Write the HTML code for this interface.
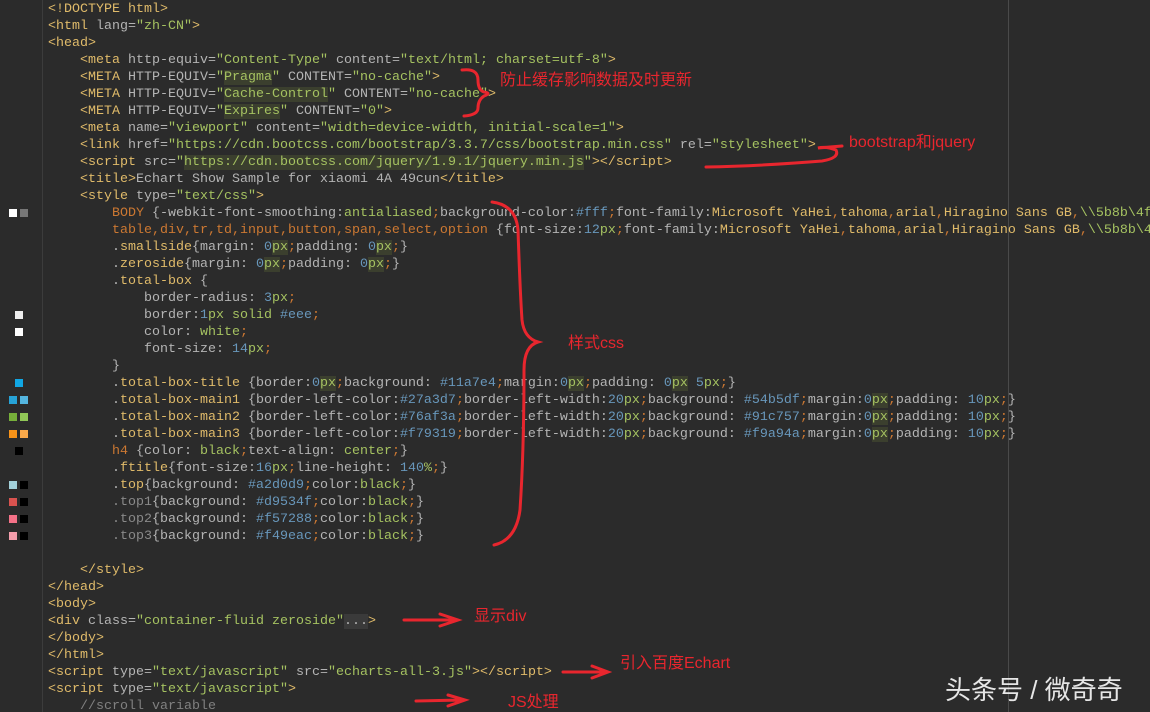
<!DOCTYPE html>
<html><head><meta charset="utf-8">
<style>
html,body{margin:0;padding:0;background:#2b2b2b;width:1150px;height:712px;overflow:hidden;position:relative}
.code{position:absolute;left:48px;top:1px;font-family:"Liberation Mono",monospace;font-size:13.33px;line-height:17px;color:#b4b4b4;white-space:pre}
.t{color:#e0bb6a}.a{color:#b4b4b4}.s{color:#a5c261}.n{color:#6897bb}.k{color:#cc7832}.sel{color:#e0bb6a}.v{color:#a5c261}.c{color:#808080}.hl{background:#3b3f2e}.px{color:#a5c261}.gy{color:#8a8a8a}
.gut{position:absolute;left:42px;top:0;width:1px;height:712px;background:#3c3c3c}
.rm{position:absolute;left:1008px;top:0;width:1px;height:712px;background:#4a4a4a}
.sw{position:absolute;width:8px;height:8px}
.red{position:absolute;color:#e8262e;font-family:"Liberation Sans","Noto Sans CJK SC",sans-serif;font-size:16px;line-height:18px;white-space:nowrap}
.wm{position:absolute;left:945px;top:670px;color:#e6e6e6;font-family:"Liberation Sans","Noto Sans CJK SC",sans-serif;font-size:26px;white-space:nowrap}
</style></head><body>
<div class="gut"></div><div class="rm"></div>
<div class="sw" style="left:9px;top:209px;background:#fff"></div><div class="sw" style="left:20px;top:209px;background:#777"></div>
<div class="sw" style="left:15px;top:311px;background:#eee"></div>
<div class="sw" style="left:15px;top:328px;background:#fff"></div>
<div class="sw" style="left:15px;top:379px;background:#11a7e4"></div>
<div class="sw" style="left:9px;top:396px;background:#27a3d7"></div><div class="sw" style="left:20px;top:396px;background:#54b5df"></div>
<div class="sw" style="left:9px;top:413px;background:#76af3a"></div><div class="sw" style="left:20px;top:413px;background:#91c757"></div>
<div class="sw" style="left:9px;top:430px;background:#f79319"></div><div class="sw" style="left:20px;top:430px;background:#f9a94a"></div>
<div class="sw" style="left:15px;top:447px;background:#000"></div>
<div class="sw" style="left:9px;top:481px;background:#a2d0d9"></div><div class="sw" style="left:20px;top:481px;background:#000"></div>
<div class="sw" style="left:9px;top:498px;background:#d9534f"></div><div class="sw" style="left:20px;top:498px;background:#000"></div>
<div class="sw" style="left:9px;top:515px;background:#f57288"></div><div class="sw" style="left:20px;top:515px;background:#000"></div>
<div class="sw" style="left:9px;top:532px;background:#f49eac"></div><div class="sw" style="left:20px;top:532px;background:#000"></div>
<div class="code"><span class="t">&lt;!DOCTYPE html&gt;</span>
<span class="t">&lt;html </span><span class="a">lang=</span><span class="s">"zh-CN"</span><span class="t">&gt;</span>
<span class="t">&lt;head&gt;</span>
    <span class="t">&lt;meta </span><span class="a">http-equiv=</span><span class="s">"Content-Type"</span> <span class="a">content=</span><span class="s">"text/html; charset=utf-8"</span><span class="t">&gt;</span>
    <span class="t">&lt;META </span><span class="a">HTTP-EQUIV=</span><span class="s">"<span class="hl">Pragma</span>"</span> <span class="a">CONTENT=</span><span class="s">"no-cache"</span><span class="t">&gt;</span>
    <span class="t">&lt;META </span><span class="a">HTTP-EQUIV=</span><span class="s">"<span class="hl">Cache-Control</span>"</span> <span class="a">CONTENT=</span><span class="s">"no-cache"</span><span class="t">&gt;</span>
    <span class="t">&lt;META </span><span class="a">HTTP-EQUIV=</span><span class="s">"<span class="hl">Expires</span>"</span> <span class="a">CONTENT=</span><span class="s">"0"</span><span class="t">&gt;</span>
    <span class="t">&lt;meta </span><span class="a">name=</span><span class="s">"viewport"</span> <span class="a">content=</span><span class="s">"width=device-width, initial-scale=1"</span><span class="t">&gt;</span>
    <span class="t">&lt;link </span><span class="a">href=</span><span class="s">"https://cdn.bootcss.com/bootstrap/3.3.7/css/bootstrap.min.css"</span> <span class="a">rel=</span><span class="s">"stylesheet"</span><span class="t">&gt;</span>
    <span class="t">&lt;script </span><span class="a">src=</span><span class="s">"<span class="hl">https://cdn.bootcss.com/jquery/1.9.1/jquery.min.js</span>"</span><span class="t">&gt;&lt;/script&gt;</span>
    <span class="t">&lt;title&gt;</span><span class="a">Echart Show Sample for xiaomi 4A 49cun</span><span class="t">&lt;/title&gt;</span>
    <span class="t">&lt;style </span><span class="a">type=</span><span class="s">"text/css"</span><span class="t">&gt;</span>
        <span class="k">BODY</span> {-webkit-font-smoothing:<span class="v">antialiased</span><span class="k">;</span>background-color:<span class="n">#fff</span><span class="k">;</span>font-family:<span class="sel">Microsoft YaHei</span><span class="k">,</span><span class="sel">tahoma</span><span class="k">,</span><span class="sel">arial</span><span class="k">,</span><span class="sel">Hiragino Sans GB</span><span class="k">,</span><span class="v">\\5b8b\4f</span>
        <span class="k">table,div,tr,td,input,button,span,select,option</span> {font-size:<span class="n">12</span><span class="px">px</span><span class="k">;</span>font-family:<span class="sel">Microsoft YaHei</span><span class="k">,</span><span class="sel">tahoma</span><span class="k">,</span><span class="sel">arial</span><span class="k">,</span><span class="sel">Hiragino Sans GB</span><span class="k">,</span><span class="v">\\5b8b\4</span>
        .<span class="sel">smallside</span>{margin: <span class="n">0</span><span class="px hl">px</span><span class="k">;</span>padding: <span class="n">0</span><span class="px hl">px</span><span class="k">;</span>}
        .<span class="sel">zeroside</span>{margin: <span class="n">0</span><span class="px hl">px</span><span class="k">;</span>padding: <span class="n">0</span><span class="px hl">px</span><span class="k">;</span>}
        .<span class="sel">total-box</span> {
            border-radius: <span class="n">3</span><span class="px">px</span><span class="k">;</span>
            border:<span class="n">1</span><span class="px">px</span> <span class="v">solid</span> <span class="n">#eee</span><span class="k">;</span>
            color: <span class="v">white</span><span class="k">;</span>
            font-size: <span class="n">14</span><span class="px">px</span><span class="k">;</span>
        }
        .<span class="sel">total-box-title</span> {border:<span class="n">0</span><span class="px hl">px</span><span class="k">;</span>background: <span class="n">#11a7e4</span><span class="k">;</span>margin:<span class="n">0</span><span class="px hl">px</span><span class="k">;</span>padding: <span class="n">0</span><span class="px hl">px</span> <span class="n">5</span><span class="px">px</span><span class="k">;</span>}
        .<span class="sel">total-box-main1</span> {border-left-color:<span class="n">#27a3d7</span><span class="k">;</span>border-left-width:<span class="n">20</span><span class="px">px</span><span class="k">;</span>background: <span class="n">#54b5df</span><span class="k">;</span>margin:<span class="n">0</span><span class="px hl">px</span><span class="k">;</span>padding: <span class="n">10</span><span class="px">px</span><span class="k">;</span>}
        .<span class="sel">total-box-main2</span> {border-left-color:<span class="n">#76af3a</span><span class="k">;</span>border-left-width:<span class="n">20</span><span class="px">px</span><span class="k">;</span>background: <span class="n">#91c757</span><span class="k">;</span>margin:<span class="n">0</span><span class="px hl">px</span><span class="k">;</span>padding: <span class="n">10</span><span class="px">px</span><span class="k">;</span>}
        .<span class="sel">total-box-main3</span> {border-left-color:<span class="n">#f79319</span><span class="k">;</span>border-left-width:<span class="n">20</span><span class="px">px</span><span class="k">;</span>background: <span class="n">#f9a94a</span><span class="k">;</span>margin:<span class="n">0</span><span class="px hl">px</span><span class="k">;</span>padding: <span class="n">10</span><span class="px">px</span><span class="k">;</span>}
        <span class="k">h4</span> {color: <span class="v">black</span><span class="k">;</span>text-align: <span class="v">center</span><span class="k">;</span>}
        .<span class="sel">ftitle</span>{font-size:<span class="n">16</span><span class="px">px</span><span class="k">;</span>line-height: <span class="n">140</span><span class="px">%</span><span class="k">;</span>}
        .<span class="sel">top</span>{background: <span class="n">#a2d0d9</span><span class="k">;</span>color:<span class="v">black</span><span class="k">;</span>}
        <span class="gy">.top1</span>{background: <span class="n">#d9534f</span><span class="k">;</span>color:<span class="v">black</span><span class="k">;</span>}
        <span class="gy">.top2</span>{background: <span class="n">#f57288</span><span class="k">;</span>color:<span class="v">black</span><span class="k">;</span>}
        <span class="gy">.top3</span>{background: <span class="n">#f49eac</span><span class="k">;</span>color:<span class="v">black</span><span class="k">;</span>}

    <span class="t">&lt;/style&gt;</span>
<span class="t">&lt;/head&gt;</span>
<span class="t">&lt;body&gt;</span>
<span class="t">&lt;div </span><span class="a">class=</span><span class="s">"container-fluid zeroside"</span><span style="background:#3a3a3a">...</span><span class="t">&gt;</span>
<span class="t">&lt;/body&gt;</span>
<span class="t">&lt;/html&gt;</span>
<span class="t">&lt;script </span><span class="a">type=</span><span class="s">"text/javascript"</span> <span class="a">src=</span><span class="s">"echarts-all-3.js"</span><span class="t">&gt;&lt;/script&gt;</span>
<span class="t">&lt;script </span><span class="a">type=</span><span class="s">"text/javascript"</span><span class="t">&gt;</span>
    <span class="c">//scroll variable</span></div>
<div class="red" style="left:500px;top:72px">防止缓存影响数据及时更新</div>
<div class="red" style="left:849px;top:134px">bootstrap和jquery</div>
<div class="red" style="left:568px;top:335px">样式css</div>
<div class="red" style="left:474px;top:608px">显示div</div>
<div class="red" style="left:620px;top:655px">引入百度Echart</div>
<div class="red" style="left:508px;top:694px">JS处理</div>
<svg width="1150" height="712" style="position:absolute;left:0;top:0" fill="none" stroke="#e8262e" stroke-width="3" stroke-linecap="round">
<path d="M462 70 Q478 68 478 80 Q478 90 484 92 Q492 93 484 96 Q478 100 478 108 Q478 115 464 116"/>
<path d="M706 167 Q760 166 822 161 Q840 158 836 150 Q826 146 818 148 L842 146"/>
<path d="M492 202 Q516 205 518 230 Q520 290 522 320 Q524 338 538 342 Q524 346 524 370 Q524 450 520 510 Q516 540 494 545"/>
<path d="M404 620 L455 620 M440 614 L458 620 L440 626"/>
<path d="M563 672 L606 672 M592 666 L608 672 L592 678"/>
<path d="M416 701 L462 700 M448 695 L465 700 L448 706"/>
</svg>
<div class="wm">头条号 / 微奇奇</div>
</body></html>
